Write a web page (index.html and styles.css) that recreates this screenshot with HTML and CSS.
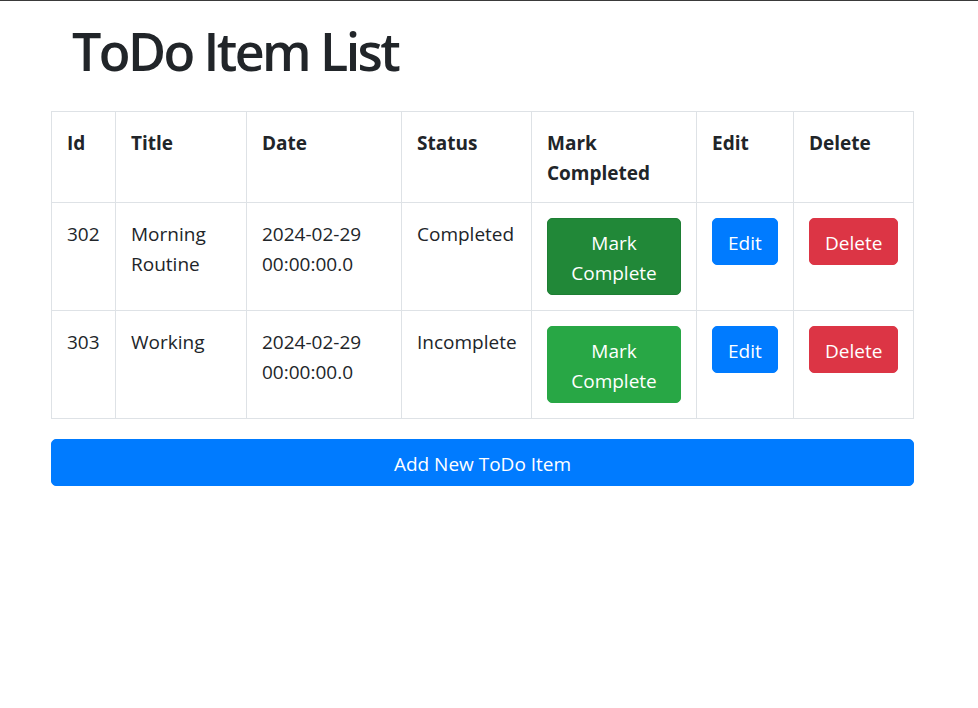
FILE: index.html
```html
<!DOCTYPE html>
<html lang="en">
<head>
<meta charset="utf-8">
<title>ToDo Item List</title>
<link rel="stylesheet" href="styles.css">
</head>
<body>
<div class="container">
  <h1 class="title">ToDo Item List</h1>
  <table class="todo-table">
    <colgroup>
      <col class="c-id"><col class="c-title"><col class="c-date"><col class="c-status"><col class="c-mark"><col class="c-edit"><col class="c-del">
    </colgroup>
    <tr class="head">
      <th>Id</th>
      <th>Title</th>
      <th>Date</th>
      <th>Status</th>
      <th>Mark Completed</th>
      <th>Edit</th>
      <th>Delete</th>
    </tr>
    <tr>
      <td>302</td>
      <td>Morning Routine</td>
      <td>2024-02-29 00:00:00.0</td>
      <td>Completed</td>
      <td><button class="btn btn-success btn-active">Mark Complete</button></td>
      <td><button class="btn btn-primary">Edit</button></td>
      <td><button class="btn btn-danger">Delete</button></td>
    </tr>
    <tr>
      <td>303</td>
      <td>Working</td>
      <td>2024-02-29 00:00:00.0</td>
      <td>Incomplete</td>
      <td><button class="btn btn-success">Mark Complete</button></td>
      <td><button class="btn btn-primary">Edit</button></td>
      <td><button class="btn btn-danger">Delete</button></td>
    </tr>
  </table>
  <button class="btn btn-primary btn-block">Add New ToDo Item</button>
</div>
</body>
</html>
```

FILE: styles.css
```css
html, body {
  margin: 0;
  padding: 0;
}
body {
  border-top: 1px solid #3a3a3a;
  font-family: "Segoe UI", "Open Sans", "Noto Sans", sans-serif;
  font-size: 19px;
  line-height: 30px;
  color: #212529;
  background: #fff;
}
.container {
  width: 863px;
  margin-left: 51px;
}
.title {
  margin: 17px 0 27px 21px;
  font-size: 52px;
  font-weight: 600;
  letter-spacing: -2.6px;
  line-height: 66px;
  color: #212529;
}
.todo-table {
  width: 863px;
  border-collapse: collapse;
  table-layout: fixed;
  margin-bottom: 20px;
}
.c-id { width: 64px; }
.c-title { width: 131px; }
.c-date { width: 155px; }
.c-status { width: 130px; }
.c-mark { width: 165px; }
.c-edit { width: 97px; }
.c-del { width: 120px; }
.todo-table th, .todo-table td {
  border: 1px solid #dee2e6;
  padding: 16px 15px 14px;
  vertical-align: top;
  text-align: left;
}
.todo-table td {
  padding-bottom: 15px;
}
.todo-table th {
  font-weight: 700;
}
.todo-table td .btn {
  margin-top: -1px;
}
.btn {
  display: inline-block;
  font-family: inherit;
  font-size: 19px;
  line-height: 30px;
  padding: 8.5px 15px 6.5px;
  border: 1px solid transparent;
  border-radius: 5px;
  color: #fff;
  text-align: center;
  cursor: pointer;
}
.btn-success {
  background: #28a745;
  border-color: #28a745;
}
.btn-success.btn-active {
  background: #218838;
  border-color: #1e7e34;
}
.btn-primary {
  background: #007bff;
  border-color: #007bff;
}
.btn-danger {
  background: #dc3545;
  border-color: #dc3545;
}
.btn-block {
  display: block;
  width: 100%;
}
```
